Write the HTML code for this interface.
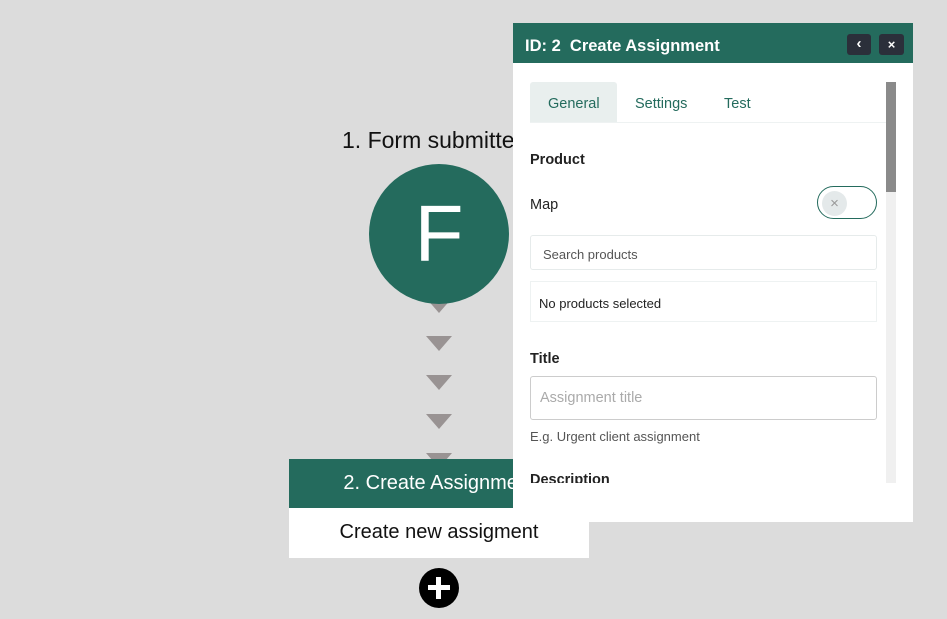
<!DOCTYPE html>
<html><head><style>
*{margin:0;padding:0;box-sizing:border-box}
body{width:947px;height:619px;background:#dcdcdc;position:relative;overflow:hidden;font-family:"Liberation Sans",sans-serif}
.a{position:absolute}
.tri{position:absolute;left:426px;width:0;height:0;border-left:13px solid transparent;border-right:13px solid transparent;border-top:15px solid #999393}
.p{font-family:"Liberation Sans",sans-serif}
</style></head><body>
<div class="a" style="left:342px;top:127px;font-size:23px;color:#111">1. Form submitted</div>
<div class="tri" style="top:298px"></div>
<div class="a" style="left:369px;top:164px;width:140px;height:140px;border-radius:50%;background:#246b5d;color:#fff;font-size:80px;text-align:center;line-height:140px">F</div>
<div class="tri" style="top:336px"></div>
<div class="tri" style="top:375px"></div>
<div class="tri" style="top:414px"></div>
<div class="tri" style="top:453px"></div>
<div class="a" style="left:289px;top:459px;width:300px;height:49px;background:#246b5d;color:#fff;font-size:20px;text-align:center;line-height:48px">2. Create Assignment</div>
<div class="a" style="left:289px;top:508px;width:300px;height:50px;background:#fff;color:#111;font-size:20px;text-align:center;line-height:48px">Create new assigment</div>
<div class="a" style="left:419px;top:568px;width:40px;height:40px;border-radius:50%;background:#000"></div>
<div class="a" style="left:428px;top:585px;width:22px;height:5px;background:#fff"></div>
<div class="a" style="left:436px;top:577px;width:5px;height:22px;background:#fff"></div>

<div class="a p" style="left:513px;top:23px;width:400px;height:499px;background:#fff">
 <div class="a" style="left:0;top:0;width:400px;height:40px;background:#246b5d;color:#fff;font-size:16.5px;font-weight:bold;line-height:46px;padding-left:12px">ID: 2&nbsp; Create Assignment</div>
 <div class="a" style="left:334px;top:11px;width:24px;height:21px;background:#2b2f3a;border-radius:3px;color:#fff;font-size:15px;text-align:center;line-height:20px;font-weight:bold">&lsaquo;</div>
 <div class="a" style="left:366px;top:11px;width:25px;height:21px;background:#2b2f3a;border-radius:3px;color:#fff;font-size:13px;text-align:center;line-height:21px;font-weight:bold">×</div>
 <div class="a" style="left:17px;top:59px;width:87px;height:41px;background:#e9efee;border-radius:3px 3px 0 0"></div>
 <div class="a" style="left:17px;top:99px;width:356px;height:1px;background:#eef2f2"></div>
 <div class="a" style="left:35px;top:73px;font-size:14.5px;color:#246b5d">General</div>
 <div class="a" style="left:122px;top:73px;font-size:14.5px;color:#246b5d">Settings</div>
 <div class="a" style="left:211px;top:73px;font-size:14.5px;color:#246b5d">Test</div>
 <div class="a" style="left:373px;top:59px;width:10px;height:401px;background:#f0f0f0"></div>
 <div class="a" style="left:373px;top:59px;width:10px;height:110px;background:#8a8a8a"></div>
 <div class="a" style="left:17px;top:129px;font-size:14.5px;font-weight:bold;color:#222">Product</div>
 <div class="a" style="left:17px;top:174px;font-size:14.5px;color:#222">Map</div>
 <div class="a" style="left:304px;top:163px;width:60px;height:33px;border:1.5px solid #246b5d;border-radius:17px"></div>
 <div class="a" style="left:309px;top:168px;width:25px;height:25px;border-radius:50%;background:#e4e9ea;color:#999;font-size:15px;text-align:center;line-height:25px">×</div>
 <div class="a" style="left:17px;top:212px;width:347px;height:35px;border:1px solid #e6ebeb;border-radius:3px;font-size:13px;color:#555;padding:11px 12px">Search products</div>
 <div class="a" style="left:17px;top:258px;width:347px;height:41px;border:1px solid #eef2f2;font-size:13px;color:#222;padding:14px 8px">No products selected</div>
 <div class="a" style="left:17px;top:328px;font-size:14.5px;font-weight:bold;color:#222">Title</div>
 <div class="a" style="left:17px;top:353px;width:347px;height:44px;border:1px solid #ccc;border-radius:3px;font-size:14.5px;color:#aaa;padding:13px 9px">Assignment title</div>
 <div class="a" style="left:17px;top:406px;font-size:13px;color:#555">E.g. Urgent client assignment</div>
 <div class="a" style="left:17px;top:449px;height:11px;overflow:hidden;font-size:14.5px;font-weight:bold;color:#222">Description</div>
</div>
</body></html>
